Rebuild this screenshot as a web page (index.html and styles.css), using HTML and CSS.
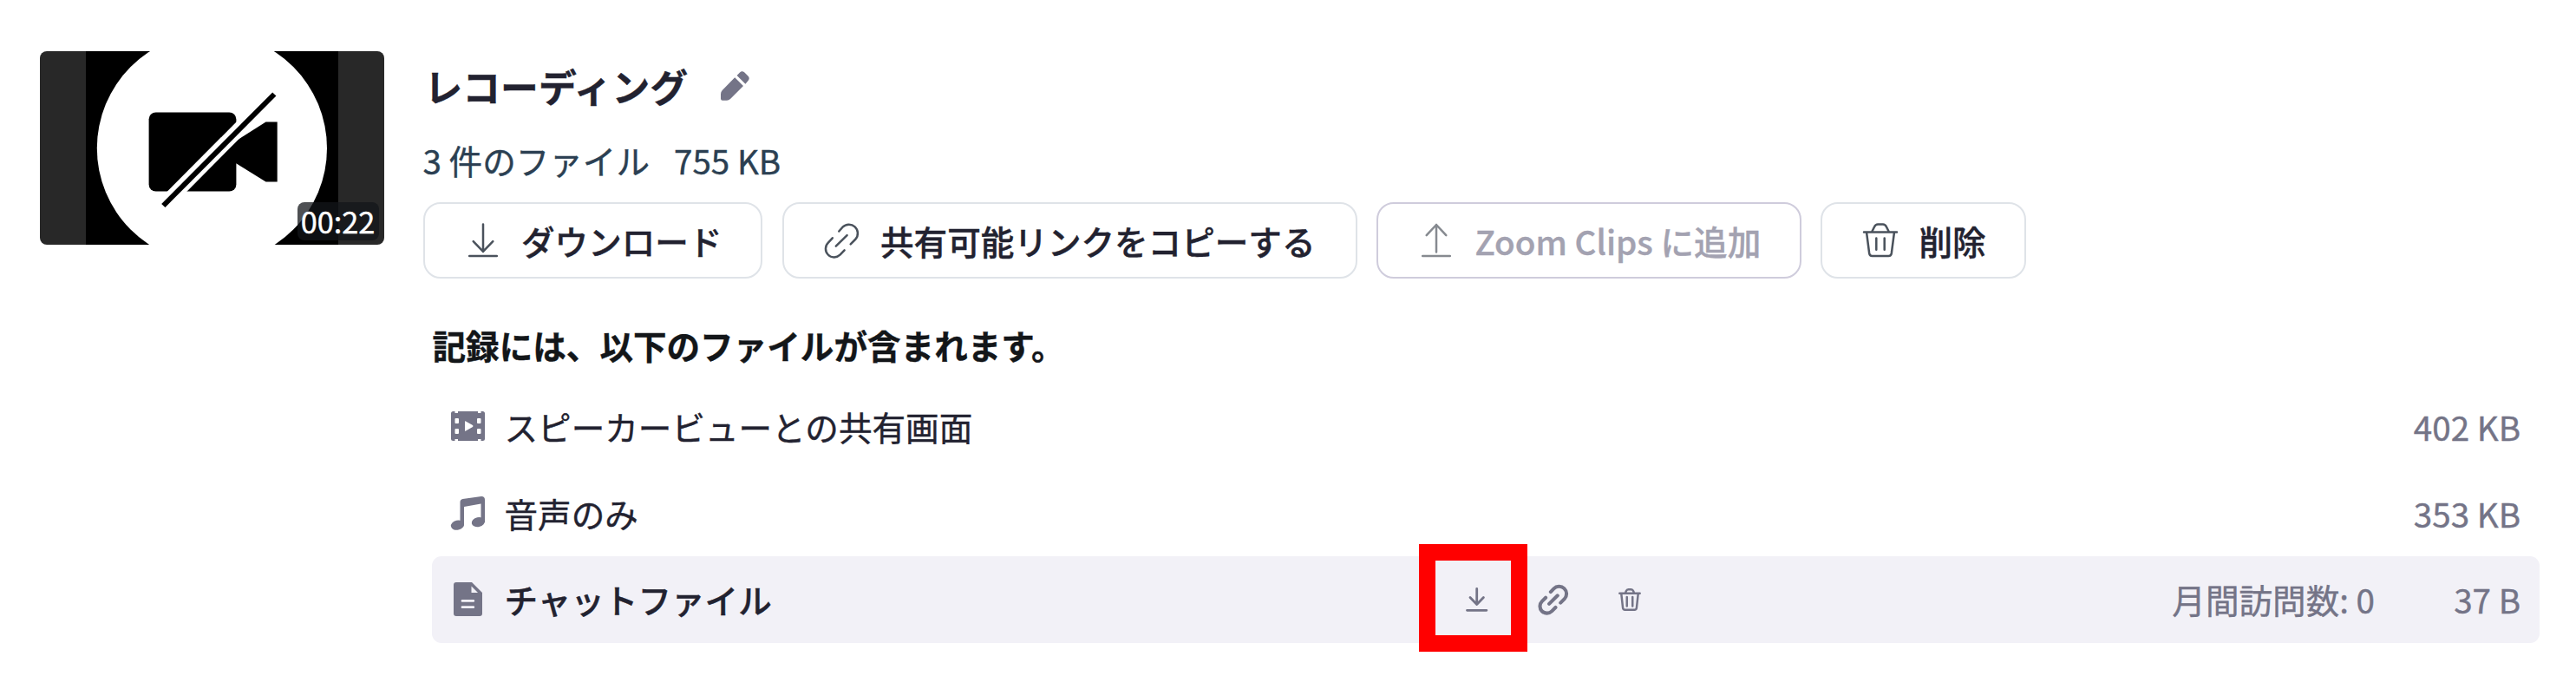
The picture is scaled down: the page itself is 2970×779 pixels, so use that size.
FILE: index.html
```
<!DOCTYPE html>
<html lang="ja">
<head>
<meta charset="utf-8">
<title>レコーディング</title>
<link rel="stylesheet" href="styles.css">
</head>
<body>
<main class="recording">
  <div class="thumb">
    <svg class="thumb-art" viewBox="0 0 397 223.5">
      <rect width="397" height="223.5" fill="#282828"/>
      <rect x="53" width="291" height="223.5" fill="#000"/>
      <circle cx="198.4" cy="111.8" r="132.6" fill="#fff"/>
      <rect x="125.6" y="70.5" width="100.8" height="91" rx="8" fill="#000"/>
      <path d="M225 104 260.5 81.5H273.7V150.5H260.5L225 128.5Z" fill="#000"/>
      <path d="M135 185 277 42" stroke="#fff" stroke-width="16"/>
      <path d="M142.3 178 270.3 49.5" stroke="#000" stroke-width="6"/>
    </svg>
    <span class="duration">00:22</span>
  </div>
  <section class="details">
    <header class="title-row">
      <h1 class="title">レコーディング</h1>
      <svg class="icon-pencil" viewBox="0 0 33 34" fill="#747487">
        <path d="M16.2 7.3 26 17.1 11 32.1Q9.2 33.8 7 33.8H2Q0 33.8 0 31.8V26.5Q0 23.8 1.8 22Z"/>
        <path d="M18.6 4.9 22 1.5Q24.6-1 27.4 1.6L31.4 5.6Q34 8.300 31.600 11L28.400 14.700Z"/>
      </svg>
    </header>
    <p class="meta"><span>3 件のファイル</span><span>755 KB</span></p>
    <div class="actions">
      <button class="btn btn-download">
        <svg class="btn-icon" viewBox="0 0 40 40"><path d="M20 1.500V33M8.700 21.200 20 32.800 31.300 21.200M4.200 37.900H35.800"/></svg>
        <span>ダウンロード</span>
      </button>
      <button class="btn btn-link">
        <svg class="btn-icon" viewBox="0 0 40 40"><path d="M16.300 9.500 20.500 4.700A10.200 10.200 0 0 1 35.500 18.500L29.700 24.300M8.800 17.300 3.900 22.700A9.500 9.500 0 0 0 17.500 36.700L22.600 31.300M12.800 26.700 25.600 14.200"/></svg>
        <span>共有可能リンクをコピーする</span>
      </button>
      <button class="btn btn-clips" disabled>
        <svg class="btn-icon" viewBox="0 0 40 40"><path d="M20 33.500V2M8.700 14.200 20 2 31.300 14.200M4.200 37.900H35.800"/></svg>
        <span>Zoom Clips に追加</span>
      </button>
      <button class="btn btn-delete">
        <svg class="btn-icon" viewBox="0 0 40 40"><path d="M1 10.500H39M4 10.500 7.200 35Q7.700 38 10.500 38H29.500Q32.300 38 32.800 35L36 10.500M10 10.500 13 4.500Q14.500 1.600 17 1.600H23Q25.500 1.600 27 4.500L30 10.500M15.300 17.500V30.800M24.700 17.500V30.800"/></svg>
        <span>削除</span>
      </button>
    </div>
    <h2 class="files-heading">記録には、以下のファイルが含まれます。</h2>
    <ul class="files">
      <li class="file">
        <svg class="file-icon" viewBox="0 0 39 39">
          <path fill="#747487" fill-rule="evenodd" d="M2.500 2H4.500V4H8V2H31V4H34.500V2H36.500Q39 2 39 4.500V33.500Q39 36 36.500 36H34.500V34H31V36H8V34H4.500V36H2.500Q0 36 0 33.500V4.500Q0 2 2.500 2ZM5.500 10Q4.500 10 4.500 11V15Q4.500 16 5.500 16H8Q9 16 9 15V11Q9 10 8 10ZM31 10Q30 10 30 11V15Q30 16 31 16H33.500Q34.500 16 34.500 15V11Q34.500 10 33.500 10ZM5.500 22Q4.500 22 4.500 23V27Q4.500 28 5.500 28H8Q9 28 9 27V23Q9 22 8 22ZM31 22Q30 22 30 23V27Q30 28 31 28H33.500Q34.500 28 34.500 27V23Q34.500 22 33.500 22ZM16 13.800V24.200Q16 25.200 17 24.600L25 19.900Q26 19 25 18.100L17 13.400Q16 12.800 16 13.800Z"/>
        </svg>
        <span class="file-name">スピーカービューとの共有画面</span>
        <span class="file-size">402 KB</span>
      </li>
      <li class="file">
        <svg class="file-icon" viewBox="0 0 39 39" fill="#747487">
          <path d="M10.500 6.500Q10.500 3.500 13.500 2.900L35 0Q39 0 39 4V30H34.500V8.600L15 12V33H10.500Z"/>
          <ellipse cx="7.500" cy="33.200" rx="7.700" ry="5.500" transform="rotate(-12 7.500 33.200)"/>
          <ellipse cx="31.400" cy="29.600" rx="7.700" ry="5.500" transform="rotate(-12 31.400 29.600)"/>
        </svg>
        <span class="file-name">音声のみ</span>
        <span class="file-size">353 KB</span>
      </li>
      <li class="file file-active">
        <svg class="file-icon" viewBox="0 0 39 39">
          <path fill="#747487" d="M6 0H24L36 12V36Q36 39 33 39H6Q3 39 3 36V3Q3 0 6 0Z"/>
          <path fill="#f2f1f7" d="M23.500 4.500V12H31Z"/>
          <path stroke="#f2f1f7" stroke-width="2.800" stroke-linecap="round" d="M13 21.400H25.800M13 28.700H25.800"/>
        </svg>
        <span class="file-name">チャットファイル</span>
        <span class="file-tools">
          <svg class="tool-download" viewBox="0 0 26 28"><path d="M12.700 1.500V19M5 11.500 12.700 19.500 20.400 11.500M1.500 26.300H23.900"/></svg>
          <svg class="tool-link" viewBox="0 0 40 40"><path d="M16.300 9.500 20.500 5.200A9.700 9.700 0 0 1 35 19L29.700 24.300M9.500 17.300 4.600 22.200A9.200 9.200 0 0 0 17.800 35.700L22.900 30.600M14.200 25.700 25.600 14.500"/></svg>
          <svg class="tool-trash" viewBox="0 0 40 40"><path d="M2 9H38M5 9 7.800 34.500Q8.200 38 11.500 38H28.500Q31.800 38 32.200 34.500L35 9M12 9 13.500 5Q14.800 2 17.500 2H22.500Q25.200 2 26.500 5L28 9M15 15.500V31.500M25 15.500V31.500"/></svg>
          <span class="highlight"></span>
        </span>
        <span class="visits">月間訪問数: 0</span>
        <span class="file-size">37 B</span>
      </li>
    </ul>
  </section>
</main>
</body>
</html>
```
FILE: styles.css
```
* { box-sizing: border-box; margin: 0; padding: 0; }

body {
  width: 2970px;
  height: 779px;
  overflow: hidden;
  background: #fff;
  color: #222230;
  font-family: "Noto Sans CJK JP", sans-serif;
  font-size: 38.6px;
  line-height: 56px;
  white-space: nowrap;
  -webkit-text-stroke: .4px;
}

svg { flex: none; overflow: visible; }

.recording {
  display: flex;
  align-items: flex-start;
  gap: 45px;
  padding: 58.5px 42px 0 45.500px;
}

.thumb {
  position: relative;
  flex: none;
  width: 397px;
  height: 223.500px;
  border-radius: 8px;
  overflow: hidden;
}
.thumb-art { display: block; width: 100%; height: 100%; }
.duration {
  position: absolute;
  right: 6px;
  bottom: 5px;
  width: 94px;
  height: 44px;
  border-radius: 8px;
  background: rgba(19, 22, 25, .75);
  color: #fff;
  font-size: 34.300px;
  line-height: 43px;
  text-align: center;
}

.details { flex: 1; min-width: 0; }

.title-row { display: flex; align-items: center; height: 80px; padding-left: 2px; gap: 38px; }
.title { font-size: 43.800px; line-height: 62px; font-weight: 700; }
.icon-pencil { width: 33px; height: 34px; }

.meta { display: flex; align-items: center; gap: 28px; height: 94.500px; padding-bottom: 4px; color: #2b3f52; }

.actions { display: flex; gap: 22.500px; height: 88px; }
.btn {
  display: flex;
  align-items: center;
  height: 88px;
  border: 2.200px solid #dfe3e8;
  border-radius: 20px;
  background: #fff;
  color: #222230;
  font: 500 38.600px/56px "Noto Sans CJK JP", sans-serif;
  gap: 24.500px;
  padding: 0 0 1px 47px;
}
.btn-icon { width: 40px; height: 40px; fill: none; stroke: #4a525c; stroke-width: 2.500; stroke-linecap: round; stroke-linejoin: round; }
.btn-download { width: 391.500px; }
.btn-link { width: 663px; }
.btn-clips { width: 489.500px; border-color: #cfccdc; color: #a3a2b1; }
.btn-clips .btn-icon { stroke: #868a90; }
.btn-delete { width: 237px; }

.files-heading {
  margin-top: 48px;
  padding-left: 11px;
  font-size: 38.600px;
  line-height: 56px;
  font-weight: 700;
  color: #131619;
}

.files { list-style: none; margin: 16.500px 0 0 10.500px; }
.file {
  display: flex;
  align-items: center;
  height: 99.700px;
  padding: 0 22px 0 22px;
  border-radius: 11px;
}
.file-active { background: #f2f1f7; }
.file-icon { width: 39px; height: 39px; margin-right: 22.500px; }
.file-name, .file-size, .visits { margin-bottom: 1px; }
.file-active .file-name { font-weight: 500; }
.file-size { margin-left: auto; color: #747487; }
.visits { margin-left: auto; color: #747487; }
.visits + .file-size { margin-left: 0; width: 168px; text-align: right; }

.file-tools {
  position: relative;
  display: flex;
  align-items: center;
  margin-left: 800.500px;
  fill: none;
  stroke: #747487;
  stroke-linecap: round;
  stroke-linejoin: round;
}
.tool-download { width: 26px; height: 28px; stroke-width: 2.800; }
.tool-link { width: 34px; height: 34px; margin-left: 58px; stroke-width: 4.800; }
.tool-trash { width: 26px; height: 26px; margin-left: 58px; stroke-width: 3.800; }
.highlight {
  position: absolute;
  left: -54px;
  top: -47px;
  width: 125px;
  height: 124.500px;
  border: 19px solid #f00;
}
```
